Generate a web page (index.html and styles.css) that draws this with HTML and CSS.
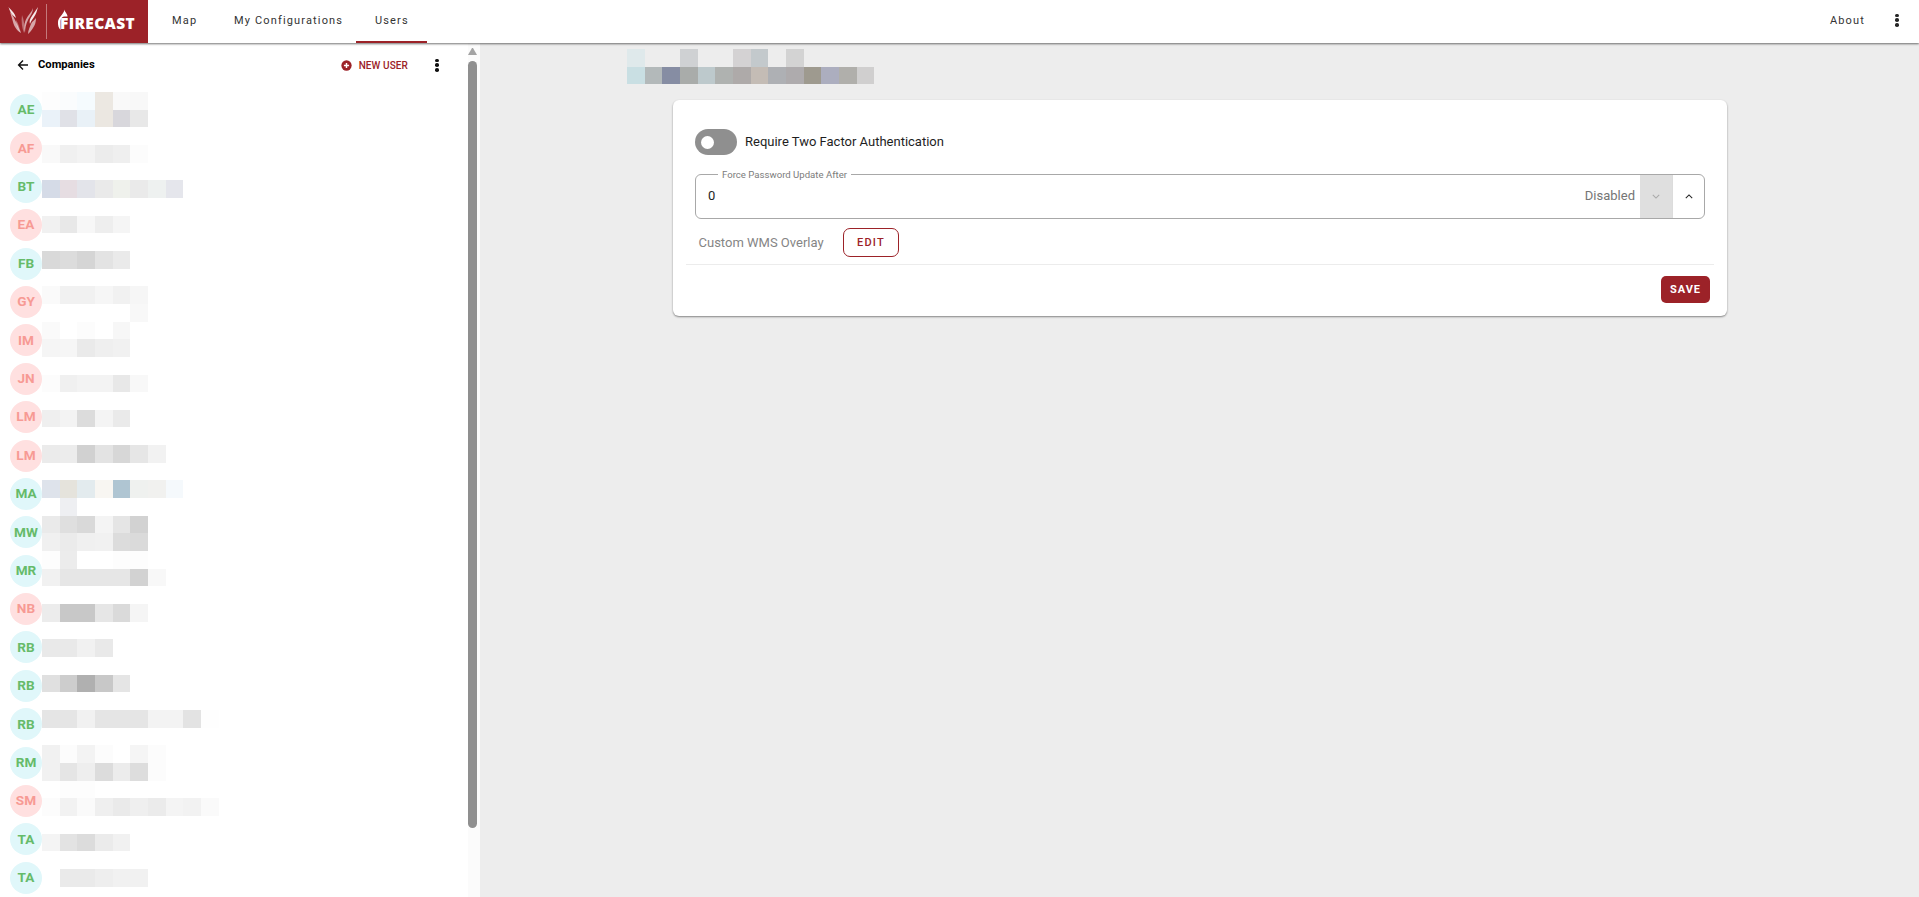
FILE: index.html
```html
<!DOCTYPE html>
<html lang="en">
<head>
<meta charset="utf-8">
<title>Firecast Users</title>
<link rel="stylesheet" href="styles.css">
</head>
<body>
<header class="topbar">
  <div class="brand">
    <svg class="emblem" viewBox="8 0 40 43" width="40" height="43">
      <path class="w-a" d="M8.500 7C11 10 15 13 16 18c-2-2-4-3-5-5S9 9 8.500 7z"/>
      <path class="w-b" d="M10 12c3 3 4 6 6 10s3 7 5 11c-4-2-7-7-8-11s-2-7-3-10z"/>
      <path class="w-c" d="M16 20c2 3 3 6 5 13-3-2-5-8-5-13z"/>
      <path class="w-c" d="M22 15c2 5 3 11 2 18-2-5-3-12-2-18z"/>
      <path class="w-a" d="M38 7c-1 4-2 7-4 10s-3 4-4 7c-1-3 0-5 2-8s4-6 6-9z"/>
      <path class="w-b" d="M33 8c0 5-3 8-5 12s-3 8-3 13c-2-6 0-13 3-17s4-5 5-8z"/>
      <path class="w-b" d="M36 18c0 4-1 7-3 10s-3 4-5 6c0-4 2-7 3-10s4-4 5-6z"/>
    </svg>
    <span class="brand-rule"></span>
    <svg class="wordmark" viewBox="0 0 80 32" width="80" height="32">
      <path class="flame" d="M7.500 3.500C7.500 6 10.500 7.500 10.500 10.500L7 10.500C5 11 3.800 12.500 3.500 15L3.500 24C1.500 22 .8 19 1 16 1.200 11 6.500 9 7.500 3.500z"/>
      <text class="wordmark-text" x="3" y="23">FIRECAST</text>
    </svg>
  </div>
  <nav class="tabs">
    <a class="tab tab-map">Map</a>
    <a class="tab tab-config">My Configurations</a>
    <a class="tab tab-users">Users</a>
  </nav>
  <div class="top-right">
    <a class="tab tab-about">About</a>
    <span class="kebab kebab-top"><i></i><i></i><i></i></span>
  </div>
</header>

<div class="content">
  <aside class="sidebar">
    <div class="side-main">
      <div class="side-head">
        <svg class="back" viewBox="0 0 12 12" width="12" height="12"><path d="M11 6H1.8M6 1.6 1.6 6 6 10.400"/></svg>
        <strong class="side-title">Companies</strong>
        <span class="side-spring"></span>
        <svg class="plus" viewBox="0 0 12 12" width="11" height="11"><circle cx="6" cy="6" r="5.6"/><path d="M6 3.200v5.600M3.200 6h5.600"/></svg>
        <span class="new-user">NEW USER</span>
        <span class="kebab kebab-side"><i></i><i></i><i></i></span>
      </div>
      <ul class="people">
        <li class="av green">AE</li>
        <li class="av red">AF</li>
        <li class="av green">BT</li>
        <li class="av red">EA</li>
        <li class="av green">FB</li>
        <li class="av red">GY</li>
        <li class="av red">IM</li>
        <li class="av red">JN</li>
        <li class="av red">LM</li>
        <li class="av red">LM</li>
        <li class="av green">MA</li>
        <li class="av green">MW</li>
        <li class="av green">MR</li>
        <li class="av red">NB</li>
        <li class="av green">RB</li>
        <li class="av green">RB</li>
        <li class="av green">RB</li>
        <li class="av green">RM</li>
        <li class="av red">SM</li>
        <li class="av green">TA</li>
        <li class="av green">TA</li>
      </ul>
      <div class="mosaic names" aria-hidden="true">
        <div class="mr"><b class="fd"></b><b class="fb"></b><b class="f6b"></b><b class="ec2"></b><b class="f9"></b><b class="f8"></b></div>
        <div class="mr"><b class="eaf"></b><b class="e0b"></b><b class="e9b"></b><b class="eb2"></b><b class="d8b"></b><b class="e8"></b></div>
        <div class="mr"></div>
        <div class="mr"><b class="f9"></b><b class="f0"></b><b class="f3"></b><b class="ec"></b><b class="ef"></b><b class="fc"></b></div>
        <div class="mr"></div>
        <div class="mr"><b class="d5b"></b><b class="e6p"></b><b class="e3b"></b><b class="ea"></b><b class="efg"></b><b class="ea"></b><b class="efg2"></b><b class="e5b"></b></div>
        <div class="mr"></div>
        <div class="mr"><b class="f1"></b><b class="e8"></b><b class="f7"></b><b class="ee"></b><b class="f5"></b></div>
        <div class="mr"></div>
        <div class="mr"><b class="d9"></b><b class="dc"></b><b class="d5"></b><b class="e3"></b><b class="ea"></b></div>
        <div class="mr"></div>
        <div class="mr"><b class="fa"></b><b class="f1"></b><b class="f1"></b><b class="f6"></b><b class="f1"></b><b class="f6"></b></div>
        <div class="mr"><b></b><b></b><b></b><b></b><b></b><b class="f8"></b></div>
        <div class="mr"><b class="fa"></b><b></b><b class="fc"></b><b></b><b class="f7"></b></div>
        <div class="mr"><b class="f5"></b><b class="f6"></b><b class="ea"></b><b class="ef"></b><b class="f1"></b></div>
        <div class="mr"></div>
        <div class="mr"><b class="fc"></b><b class="f0"></b><b class="f3"></b><b class="f3"></b><b class="e8"></b><b class="f8"></b></div>
        <div class="mr"></div>
        <div class="mr"><b class="ef"></b><b class="f3"></b><b class="dc"></b><b class="f4"></b><b class="ea"></b></div>
        <div class="mr"></div>
        <div class="mr"><b class="eb"></b><b class="ec"></b><b class="d1"></b><b class="e3"></b><b class="d7"></b><b class="e6"></b><b class="f2"></b></div>
        <div class="mr"></div>
        <div class="mr"><b class="deb"></b><b class="e5y"></b><b class="e3c"></b><b class="f8y"></b><b class="afc"></b><b class="efg3"></b><b class="f1y"></b><b class="f5c"></b></div>
        <div class="mr"><b></b><b class="eeb"></b></div>
        <div class="mr"><b class="ea"></b><b class="df"></b><b class="d9"></b><b class="f4"></b><b class="e5"></b><b class="d2"></b></div>
        <div class="mr"><b class="f0"></b><b class="eb"></b><b class="f0"></b><b class="f1"></b><b class="dc"></b><b class="da"></b></div>
        <div class="mr"><b class="fd"></b><b class="ec"></b><b></b><b></b><b class="fd"></b><b class="fd"></b></div>
        <div class="mr"><b class="f1"></b><b class="e6"></b><b class="e6"></b><b class="e6"></b><b class="e6"></b><b class="d2"></b><b class="f8"></b></div>
        <div class="mr"></div>
        <div class="mr"><b class="ec"></b><b class="c8"></b><b class="c8"></b><b class="e6"></b><b class="da"></b><b class="f5"></b></div>
        <div class="mr"></div>
        <div class="mr"><b class="e9"></b><b class="e9"></b><b class="f1"></b><b class="e9"></b></div>
        <div class="mr"></div>
        <div class="mr"><b class="e0"></b><b class="cd"></b><b class="b0"></b><b class="c8"></b><b class="e5"></b></div>
        <div class="mr"></div>
        <div class="mr"><b class="e5"></b><b class="e5"></b><b class="f1"></b><b class="e5"></b><b class="e5"></b><b class="e5"></b><b class="f3"></b><b class="f3"></b><b class="e3"></b><b class="fe"></b></div>
        <div class="mr"></div>
        <div class="mr"><b class="f1"></b><b class="fc"></b><b class="f3"></b><b class="fc"></b><b></b><b class="f5"></b><b class="fc"></b></div>
        <div class="mr"><b class="f1"></b><b class="e5"></b><b class="ee"></b><b class="dc"></b><b class="ec"></b><b class="dd"></b><b class="fc"></b></div>
        <div class="mr"><b></b><b class="fd"></b><b class="fd"></b></div>
        <div class="mr"><b class="fc"></b><b class="f2"></b><b class="fa"></b><b class="ef"></b><b class="ea"></b><b class="ef"></b><b class="eb"></b><b class="f4"></b><b class="f2"></b><b class="fa"></b></div>
        <div class="mr"></div>
        <div class="mr"><b class="f4"></b><b class="e3"></b><b class="dc"></b><b class="eb"></b><b class="f1"></b></div>
        <div class="mr"></div>
        <div class="mr"><b></b><b class="ea"></b><b class="ea"></b><b class="ee"></b><b class="f1"></b><b class="f1"></b></div>
      </div>
    </div>
    <div class="scrollbar">
      <span class="sb-arrow"></span>
      <span class="sb-thumb"></span>
    </div>
  </aside>

  <main class="main">
    <div class="mosaic heading" aria-hidden="true">
      <div class="mr"><b class="h1"></b><b></b><b></b><b class="h2"></b><b></b><b></b><b class="h3"></b><b class="h4"></b><b></b><b class="h5"></b></div>
      <div class="mr"><b class="h6"></b><b class="h7"></b><b class="h8"></b><b class="h9"></b><b class="h10"></b><b class="h11"></b><b class="h12"></b><b class="h13"></b><b class="h14"></b><b class="h15"></b><b class="h16"></b><b class="h17"></b><b class="h18"></b><b class="h19"></b></div>
    </div>
    <section class="card">
      <div class="toggle-row">
        <span class="toggle"><span class="knob"></span></span>
        <span class="toggle-label">Require Two Factor Authentication</span>
      </div>
      <div class="field">
        <span class="field-label">Force Password Update After</span>
        <span class="field-value">0</span>
        <span class="field-suffix">Disabled</span>
        <span class="step step-down"><svg viewBox="0 0 10 6" width="8" height="5"><path d="M1 1l4 4 4-4"/></svg></span>
        <span class="step step-up"><svg viewBox="0 0 10 6" width="8" height="5"><path d="M1 5l4-4 4 4"/></svg></span>
      </div>
      <div class="wms-row">
        <span class="wms-label">Custom WMS Overlay</span>
        <button class="btn-edit">EDIT</button>
      </div>
      <div class="card-foot">
        <button class="btn-save">SAVE</button>
      </div>
    </section>
  </main>
</div>
</body>
</html>
```

FILE: styles.css
```css
* { box-sizing: border-box; }
html, body { margin: 0; height: 100%; overflow: hidden; }
body { font-family: Roboto, "Liberation Sans", sans-serif; background: #ededed; color: #212121; }

.topbar {
  height: 43px;
  background: #fff;
  display: flex;
  align-items: stretch;
  position: relative;
  z-index: 2;
  box-shadow: 0 1px 2px rgba(0,0,0,.55);
}
.brand { width: 148px; background: #9c2228; display: flex; align-items: center; padding-left: 8px; }
.emblem { flex: none; }
.w-a, .w-b, .w-c { fill: #fff; }
.w-a { opacity: .9; }
.w-b { opacity: .6; }
.w-c { opacity: .35; }
.brand-rule { width: 1px; height: 35px; background: #c4797c; margin: 0 0 0 -2px; flex: none; }
.wordmark { flex: none; margin-left: 10px; margin-top: 1px; }
.flame { fill: #fff; }
.wordmark-text { fill: #fff; font: 800 15.5px "Open Sans", sans-serif; letter-spacing: .35px; }

.tabs { display: flex; flex: 1; }
.tab { font-size: 11px; font-weight: 400; letter-spacing: 1.15px; color: #333; display: flex; align-items: center; height: 43px; padding-bottom: 3px; }
.tab-map { margin-left: 24px; width: 24px; }
.tab-config { margin-left: 38px; width: 108px; white-space: nowrap; }
.tab-users { margin-left: 14px; padding: 0 0 1px 19px; border-bottom: 2px solid #9c2228; height: 43px; width: 71px; }
.top-right { display: flex; align-items: center; }
.tab-about { margin-right: 30px; }
.kebab { display: flex; flex-direction: column; justify-content: space-between; width: 4px; }
.kebab i { display: block; width: 3.6px; height: 3.6px; border-radius: 50%; background: #262626; }
.kebab-top { height: 13px; margin-right: 20px; margin-top: -3px; }
.kebab-side { height: 13px; margin-left: 27px; }
.kebab-side i { background: #111; }

.content { display: flex; height: 854px; }
.sidebar { width: 480px; background: #fff; display: flex; flex: none; overflow: hidden; }
.side-main { flex: 1; position: relative; }
.side-head { display: flex; align-items: center; height: 44px; padding: 0 0 0 17px; }
.back { flex: none; }
.back path { fill: none; stroke: #111; stroke-width: 1.4; }
.side-title { margin-left: 9px; font-size: 11.2px; font-weight: 700; color: #000; margin-top: -2px; }
.side-spring { flex: 1; }
.plus { flex: none; }
.plus circle { fill: #9c2228; }
.plus path { stroke: #fff; stroke-width: 1.6; }
.new-user { margin-left: 7px; font-size: 10px; font-weight: 500; color: #9c2228; letter-spacing: .1px; }
.kebab-side { margin-right: 29px; }

.people { list-style: none; margin: 7px 0 0; padding: 0 0 0 10px; display: flex; flex-direction: column; gap: 6.4px; }
.av { width: 32px; height: 32px; border-radius: 50%; display: flex; align-items: center; justify-content: center; font-size: 13.6px; font-weight: 700; padding-bottom: 1.5px; }
.green { background: #e0f7fa; color: #66bb6a; }
.red { background: #ffe0e0; color: #f79a94; }

.mosaic { position: absolute; }
.names { left: 42px; top: 49px; }
.heading { left: 147px; top: 6px; }
.mr { display: flex; height: 17.67px; }
.mr b { display: block; width: 17.67px; height: 17.67px; flex: none; }

.fe { background: #fefefe; } .fd { background: #fdfdfd; } .fc { background: #fcfcfc; } .fb { background: #fafcfd; }
.fa { background: #fafafa; } .f9 { background: #f9f9f9; } .f8 { background: #f8f8f8; } .f7 { background: #f7f7f7; }
.f6 { background: #f6f6f6; } .f5 { background: #f5f5f5; } .f4 { background: #f4f4f4; } .f3 { background: #f3f3f3; }
.f2 { background: #f2f2f2; } .f1 { background: #f1f1f1; } .f0 { background: #f0f0f0; } .ef { background: #efefef; }
.ee { background: #eeeeee; } .ec { background: #ececec; } .eb { background: #ebebeb; } .ea { background: #eaeaea; }
.e9 { background: #e9e9e9; } .e8 { background: #e8e8e8; } .e6 { background: #e6e6e6; } .e5 { background: #e5e5e5; }
.e3 { background: #e3e3e3; } .e0 { background: #e0e0e0; } .df { background: #dfdfdf; } .dd { background: #dddddd; }
.dc { background: #dcdcdc; } .da { background: #dadada; } .d9 { background: #d9d9d9; } .d7 { background: #d7d7d7; }
.d5 { background: #d5d5d5; } .d2 { background: #d2d2d2; } .d1 { background: #d1d1d1; } .cd { background: #cdcdcd; }
.c8 { background: #c8c8c8; } .b0 { background: #b0b0b0; }
.f6b { background: #f5fbfe; } .ec2 { background: #ece8e2; } .eaf { background: #eaf2f9; } .e0b { background: #e0e1e7; }
.e9b { background: #e9f1f7; } .eb2 { background: #ebe7e1; } .d8b { background: #d8d7dc; } .d5b { background: #d5dbe7; }
.e6p { background: #e6dde2; } .e3b { background: #e3e4ea; } .efg { background: #eff1ec; } .efg2 { background: #eef1f0; }
.e5b { background: #e5e6ec; } .deb { background: #dee3eb; } .e5y { background: #e5e3dc; } .e3c { background: #e3ebee; }
.f8y { background: #f8f6f2; } .afc { background: #afc5d2; } .efg3 { background: #eff1ef; } .f1y { background: #f1f1ef; }
.f5c { background: #f5f9fc; } .eeb { background: #eeeff2; }
.h1 { background: #dfe9eb; } .h2 { background: #cfd1d3; } .h3 { background: #d4d2d3; } .h4 { background: #c3c9cc; }
.h5 { background: #d3d3d3; } .h6 { background: #c9dfe3; } .h7 { background: #b3b9ba; } .h8 { background: #868da3; }
.h9 { background: #a9acaa; } .h10 { background: #bdc9cc; } .h11 { background: #afb2b0; } .h12 { background: #aeaaa9; }
.h13 { background: #c4bcb5; } .h14 { background: #aeb0b4; } .h15 { background: #aeabad; } .h16 { background: #9e9a8f; }
.h17 { background: #acaebf; } .h18 { background: #b0afab; } .h19 { background: #d0cfcf; }

.scrollbar { width: 12px; flex: none; background: #fbfbfb; padding: 5px 3px 0 0; display: flex; flex-direction: column; align-items: stretch; }
.sb-arrow { width: 9px; height: 7px; border-left: 4.5px solid transparent; border-right: 4.5px solid transparent; border-bottom: 7px solid #a3a3a3; }
.sb-thumb { height: 767px; margin-top: 6px; background: #8f8f8f; border-radius: 5px; }

.main { flex: 1; position: relative; padding: 57px 192px 0 193px; }
.card { background: #fff; height: 216px; border-radius: 6px; box-shadow: 0 1px 2px rgba(0,0,0,.45); padding: 29px 13px 0; display: flex; flex-direction: column; }
.toggle-row { display: flex; align-items: center; padding-left: 9px; height: 26px; }
.toggle { width: 42px; height: 26px; border-radius: 13px; background: #8f8f8f; display: flex; align-items: center; padding-left: 6px; flex: none; }
.knob { width: 13px; height: 13px; border-radius: 50%; background: #fff; }
.toggle-label { margin-left: 8px; font-size: 13px; color: #1e1e1e; margin-top: -2px; }

.field { position: relative; margin: 19px 9px 0; height: 45px; border: 1px solid #a8a8a8; border-radius: 6px; display: flex; align-items: stretch; }
.field-label { position: absolute; left: 22px; top: -6px; padding: 0 4px; background: #fff; font-size: 9.6px; color: #7c7c7c; line-height: 11px; }
.field-value { padding: 0 0 2px 12px; font-size: 13px; color: #1e1e1e; display: flex; align-items: center; }
.field-suffix { margin-left: auto; margin-right: 5px; padding-bottom: 2px; font-size: 13px; color: #757575; display: flex; align-items: center; }
.step { width: 32px; display: flex; align-items: center; justify-content: center; flex: none; }
.step svg path { fill: none; stroke-width: 1.3; }
.step-down { background: #dfdfdf; }
.step-down path { stroke: #a9a9a9; }
.step-up { border-left: 1px solid #dcdcdc; }
.step-up path { stroke: #222; }

.wms-row { display: flex; align-items: center; padding: 8px 0 0 12.5px; height: 39px; }
.wms-label { font-size: 13px; color: #858585; margin-top: -1px; width: 144.5px; flex: none; }
.btn-edit { width: 56px; height: 29px; margin: 0; padding: 0; background: #fff; border: 1px solid #9c2228; border-radius: 7px; color: #9c2228; font: 500 11px Roboto, sans-serif; letter-spacing: 1.2px; }
.card-foot { margin-top: 6px; border-top: 1px solid #ececec; display: flex; justify-content: flex-end; padding: 11px 4px 0 0; }
.btn-save { width: 49px; height: 27px; margin: 0; padding: 0; background: #9c2228; border: 0; border-radius: 5px; color: #fff; font: 700 11px Roboto, sans-serif; letter-spacing: 1px; }
```
